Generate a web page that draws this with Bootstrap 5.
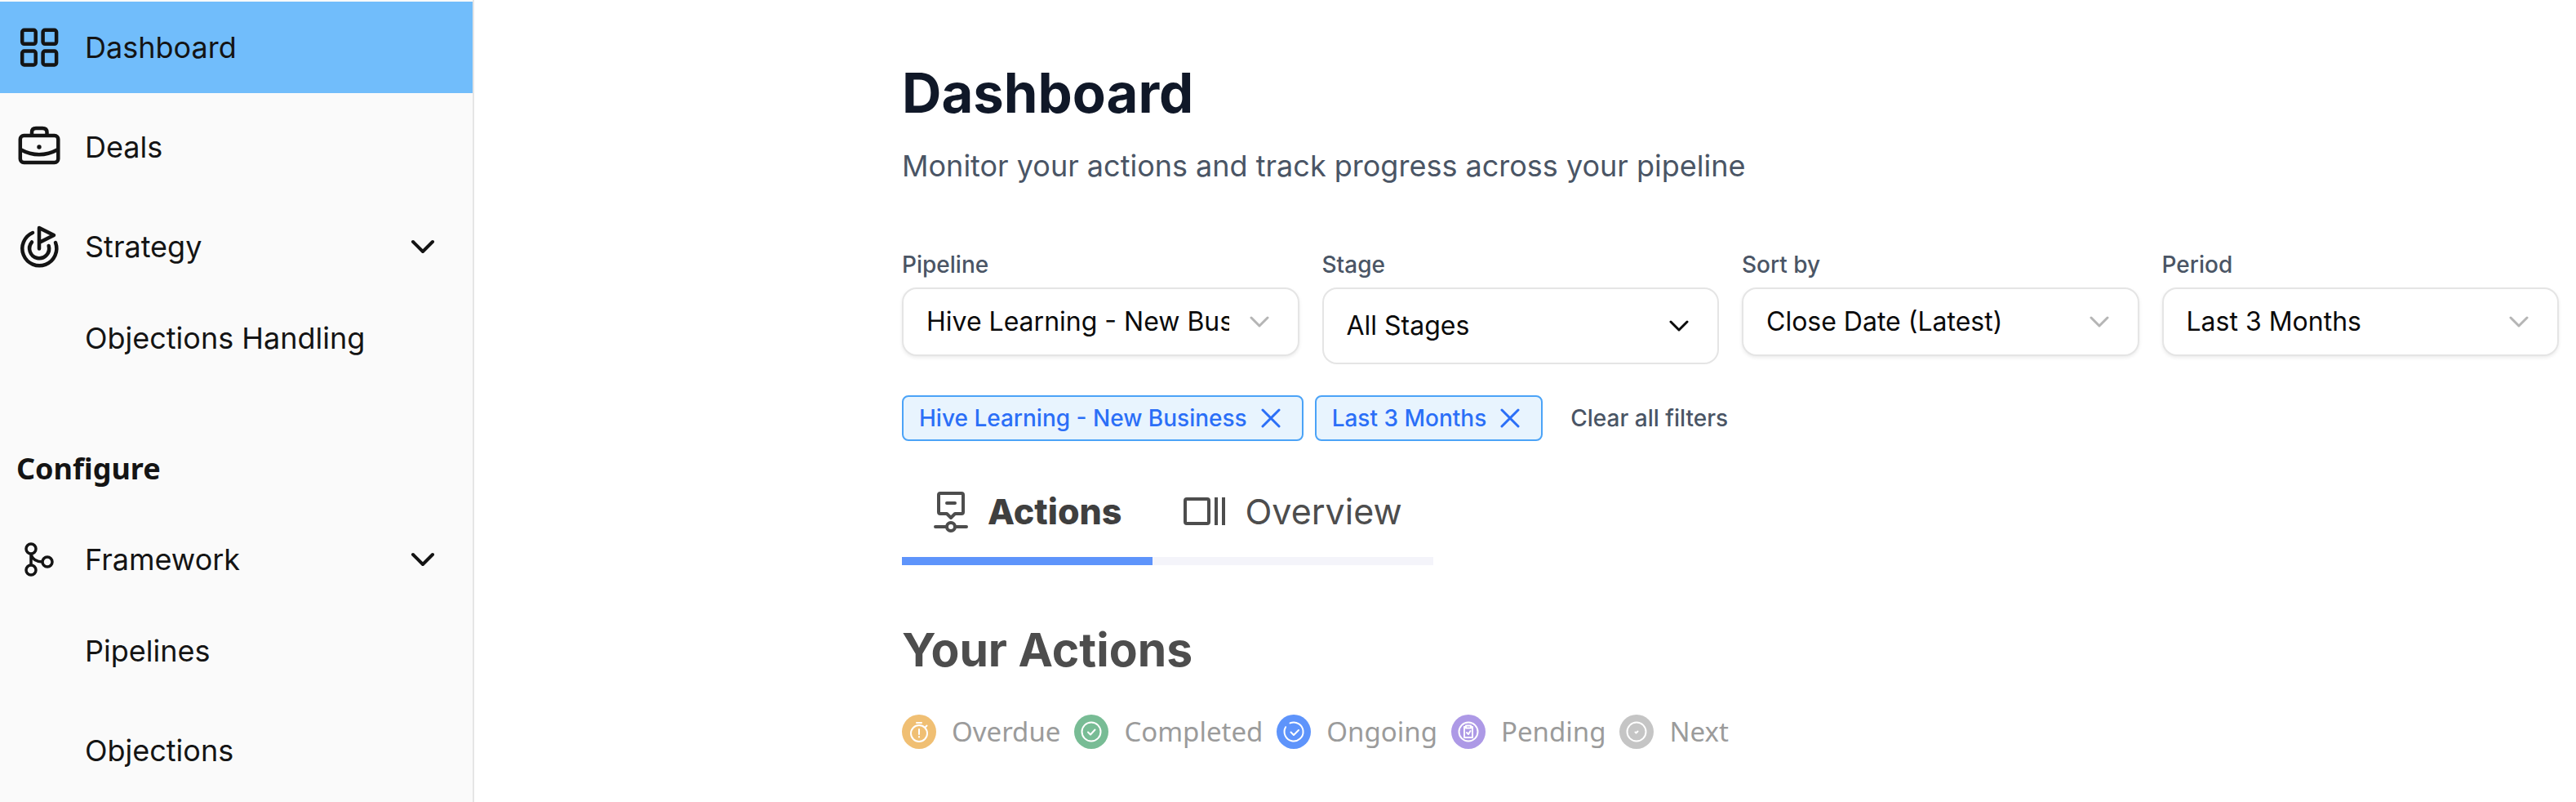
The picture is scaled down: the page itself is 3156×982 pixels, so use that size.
<!DOCTYPE html>
<html lang="en">
<head>
<meta charset="utf-8">
<meta name="viewport" content="width=device-width, initial-scale=1">
<title>Dashboard</title>
<link href="https://cdn.jsdelivr.net/npm/bootstrap@5.3.0/dist/css/bootstrap.min.css" rel="stylesheet">
<style>
  body { font-family: Inter, "Liberation Sans", sans-serif; color: #141414; background: #fff; overflow-x: hidden; }
  .side-panel { flex: 0 0 581px; background: #fafafa; border-right: 2px solid #e5e5e5; padding-top: 2px; }
  .side-link { height: 112px; padding: 0 46px 0 20px; gap: 28px; font-size: 36px; line-height: 48px; color: #141414; text-decoration: none; border: 0; background: none; width: 100%; text-align: left; }
  .side-link.is-active { background: #71bdfb; }
  .side-link.is-spaced { margin-top: 10px; }
  .side-link.is-child { padding-left: 104px; }
  .side-icon { width: 56px; height: 56px; flex: none; }
  .side-caption { font-family: "Noto Sans", sans-serif; font-weight: 700; font-size: 36px; line-height: 48px; padding: 80px 20px 31px; margin: 0; }
  .page-body { padding: 76px 21px 0 524px; min-width: 0; }
  .page-title { font-size: 67px; line-height: 76px; font-weight: 700; color: #101828; margin: 0 0 23px; }
  .page-lead { font-size: 36px; line-height: 56px; color: #4a5565; margin: 0 0 73px; }
  .filter-row { display: grid; grid-template-columns: repeat(4, minmax(0, 1fr)); gap: 28px; align-items: start; margin-bottom: 38px; }
  .filter-label { display: block; font-size: 28px; line-height: 40px; font-weight: 500; color: #4a5565; margin-bottom: 8px; }
  .filter-select { height: 84px; padding: 0 84px 0 28px; border: 2px solid #e5e5e5; border-radius: 18px; font-size: 32px; line-height: 44px; color: #0a0a0a; box-shadow: 0 2px 4px rgba(0,0,0,.08);
    background-image: url("data:image/svg+xml,%3Csvg xmlns='http://www.w3.org/2000/svg' viewBox='0 0 24 14' fill='none' stroke='%23b5b5b5' stroke-width='3' stroke-linecap='round' stroke-linejoin='round'%3E%3Cpath d='M2 2l10 10L22 2'/%3E%3C/svg%3E"); background-size: 24px 14px; background-position: right 35px center; }
  .filter-select.is-tall { height: 94px; box-shadow: none; background-image: url("data:image/svg+xml,%3Csvg xmlns='http://www.w3.org/2000/svg' viewBox='0 0 24 14' fill='none' stroke='%230a0a0a' stroke-width='3' stroke-linecap='round' stroke-linejoin='round'%3E%3Cpath d='M2 2l10 10L22 2'/%3E%3C/svg%3E"); }
  .chip-list { gap: 14px; margin-bottom: 42px; }
  .filter-chip { height: 56px; padding: 0 25px 0 19px; gap: 16px; background: #e8f4fe; border: 2px solid #4ba3f7; border-radius: 8px; color: #2b6ff7; font-size: 28px; font-weight: 500; line-height: 40px; }
  .chip-close { border: 0; background: none; padding: 0; color: inherit; display: flex; }
  .clear-link { border: 0; background: none; padding: 0; margin-left: 20px; color: #4a5565; font-size: 28px; line-height: 40px; font-weight: 500; }
  .tab-link { height: 110px; padding: 0 38px 12px; gap: 23px; border: 0; border-bottom: 10px solid #f4f4fa; background: none; font-size: 43px; line-height: 56px; color: #4d4d4d; }
  .tab-link.is-current { border-color: #5e94fb; font-weight: 800; color: #3f3f3f; }
  .section-title { font-size: 57px; line-height: 72px; font-weight: 700; color: #4d4d4d; margin: 68px 0 40px; }
  .legend-list { gap: 17px; font-family: "Noto Sans", sans-serif; font-size: 33px; line-height: 48px; color: #9b9b9b; }
  .legend-list li { display: flex; align-items: center; gap: 19px; }
  .legend-list svg { width: 42px; height: 42px; fill: none; stroke: #fff; stroke-width: 2; stroke-linecap: round; stroke-linejoin: round; }
  .legend-list .disc { stroke: none; }
</style>
</head>
<body>
<div class="d-flex min-vh-100">
  <nav class="side-panel" aria-label="Main">
    <a class="side-link is-active d-flex align-items-center" href="#">
      <svg class="side-icon" viewBox="0 0 56 56" fill="none" stroke="#141414" stroke-width="4.5"><rect x="7.200" y="6.800" width="16.500" height="17" rx="2.500"/><rect x="32.600" y="6.800" width="16.500" height="17" rx="2.500"/><rect x="7.200" y="32.500" width="16.500" height="17" rx="2.500"/><rect x="32.600" y="32.500" width="16.500" height="17" rx="2.500"/></svg>
      Dashboard</a>
    <a class="side-link is-spaced d-flex align-items-center" href="#">
      <svg class="side-icon" viewBox="0 0 56 56" fill="none" stroke="#141414" stroke-width="4.5"><rect x="4.800" y="14" width="46.500" height="33" rx="4.500"/><path d="M19 14v-4q0-5 5-5h8q5.500 0 5.500 5v4M5 31q23 12.500 46 0"/><circle cx="28" cy="28" r="2.700" fill="#141414" stroke="none"/></svg>
      Deals</a>
    <button class="side-link is-spaced d-flex align-items-center" type="button">
      <svg class="side-icon" viewBox="0 0 56 56" fill="none" stroke="#141414" stroke-width="4.500" stroke-linecap="round" stroke-linejoin="round"><path d="M28 30.500V5l18 9-18 9M20 11a21 21 0 1 0 28 12M19 22.500a12 12 0 1 0 20.700 4.500"/></svg>
      <span class="flex-grow-1">Strategy</span>
      <svg width="30" height="18" viewBox="0 0 30 18" fill="none" stroke="#141414" stroke-width="4" stroke-linecap="round" stroke-linejoin="round"><path d="M3 3l12 12L27 3"/></svg></button>
    <a class="side-link is-child d-flex align-items-center" href="#">Objections Handling</a>
    <h2 class="side-caption">Configure</h2>
    <button class="side-link d-flex align-items-center" type="button">
      <svg class="side-icon" viewBox="0 0 56 56" fill="none" stroke="#141414" stroke-width="3.500"><circle cx="18" cy="15" r="6"/><circle cx="18" cy="41" r="6"/><circle cx="38" cy="31" r="6"/><path d="M18 21v14M18 22q3 9 14 9"/></svg>
      <span class="flex-grow-1">Framework</span>
      <svg width="30" height="18" viewBox="0 0 30 18" fill="none" stroke="#141414" stroke-width="4" stroke-linecap="round" stroke-linejoin="round"><path d="M3 3l12 12L27 3"/></svg></button>
    <a class="side-link is-child d-flex align-items-center" href="#">Pipelines</a>
    <a class="side-link is-child is-spaced d-flex align-items-center" href="#">Objections</a>
  </nav>
  <main class="page-body flex-grow-1">
    <h1 class="page-title">Dashboard</h1>
    <p class="page-lead">Monitor your actions and track progress across your pipeline</p>
    <div class="filter-row">
      <div><label class="filter-label" for="f1">Pipeline</label><select class="form-select filter-select" id="f1"><option>Hive Learning - New Business</option></select></div>
      <div><label class="filter-label" for="f2">Stage</label><select class="form-select filter-select is-tall" id="f2"><option>All Stages</option></select></div>
      <div><label class="filter-label" for="f3">Sort by</label><select class="form-select filter-select" id="f3"><option>Close Date (Latest)</option></select></div>
      <div><label class="filter-label" for="f4">Period</label><select class="form-select filter-select" id="f4"><option>Last 3 Months</option></select></div>
    </div>
    <div class="chip-list d-flex align-items-center">
      <span class="filter-chip d-flex align-items-center">Hive Learning - New Business <button class="chip-close" type="button" aria-label="Remove pipeline filter"><svg width="26" height="26" viewBox="0 0 26 26" stroke="currentColor" stroke-width="3" stroke-linecap="round"><path d="M3 3l20 20M23 3L3 23"/></svg></button></span>
      <span class="filter-chip d-flex align-items-center">Last 3 Months <button class="chip-close" type="button" aria-label="Remove period filter"><svg width="26" height="26" viewBox="0 0 26 26" stroke="currentColor" stroke-width="3" stroke-linecap="round"><path d="M3 3l20 20M23 3L3 23"/></svg></button></span>
      <button class="clear-link" type="button">Clear all filters</button>
    </div>
    <div class="d-flex" role="tablist">
      <button class="tab-link is-current d-flex align-items-center" role="tab" aria-selected="true" type="button">
        <svg width="44" height="52" viewBox="0 0 44 52" fill="none" stroke="#4d4d4d" stroke-width="4" stroke-linecap="round" stroke-linejoin="round"><path d="M9 4h26q2 0 2 2v21q0 2-2 2h-8l-5 5-5-5H9q-2 0-2-2V6q0-2 2-2zM17 16h10M3 45h13M28 45h13"/><circle cx="22" cy="45" r="5"/></svg>
        Actions</button>
      <button class="tab-link d-flex align-items-center" role="tab" aria-selected="false" type="button">
        <svg width="52" height="36" viewBox="0 0 52 36" fill="none" stroke="currentColor" stroke-width="4"><rect x="2" y="3" width="29" height="30" rx="2"/><path d="M40 1v34M49 1v34"/></svg>
        Overview</button>
    </div>
    <h2 class="section-title">Your Actions</h2>
    <ul class="legend-list d-flex list-unstyled mb-0">
      <li><svg viewBox="0 0 42 42"><circle class="disc" cx="21" cy="21" r="21" fill="#f0bf73"/><circle cx="21" cy="23" r="10"/><path d="M18 10h6M29 15l1.500-1.500M21 18v6M21 27v.5"/></svg>Overdue</li>
      <li><svg viewBox="0 0 42 42"><circle class="disc" cx="21" cy="21" r="21" fill="#78bc95"/><circle cx="21" cy="21" r="11.500"/><path d="M17 21.500l3 3 5.500-6"/></svg>Completed</li>
      <li><svg viewBox="0 0 42 42"><circle class="disc" cx="21" cy="21" r="21" fill="#5e94fb"/><path d="M16.500 10.400a11.500 11.500 0 1 1-5.400 4.800M17.500 21.500l3.500 3.500 6-6"/></svg>Ongoing</li>
      <li><svg viewBox="0 0 42 42"><circle class="disc" cx="21" cy="21" r="21" fill="#ad99e6"/><circle cx="21" cy="21" r="11.500"/><path d="M18 15h-2v13h10V15h-2M18 13.500h6v3h-6zM19 22l2 2 2.500-4"/></svg>Pending</li>
      <li><svg viewBox="0 0 42 42"><circle class="disc" cx="21" cy="21" r="21" fill="#c5c5c5"/><circle cx="21" cy="21" r="11.500"/><path d="M19.500 21.500l1 1 2-2"/></svg>Next</li>
    </ul>
  </main>
</div>
<script src="https://cdn.jsdelivr.net/npm/bootstrap@5.3.0/dist/js/bootstrap.bundle.min.js"></script>
</body>
</html>
